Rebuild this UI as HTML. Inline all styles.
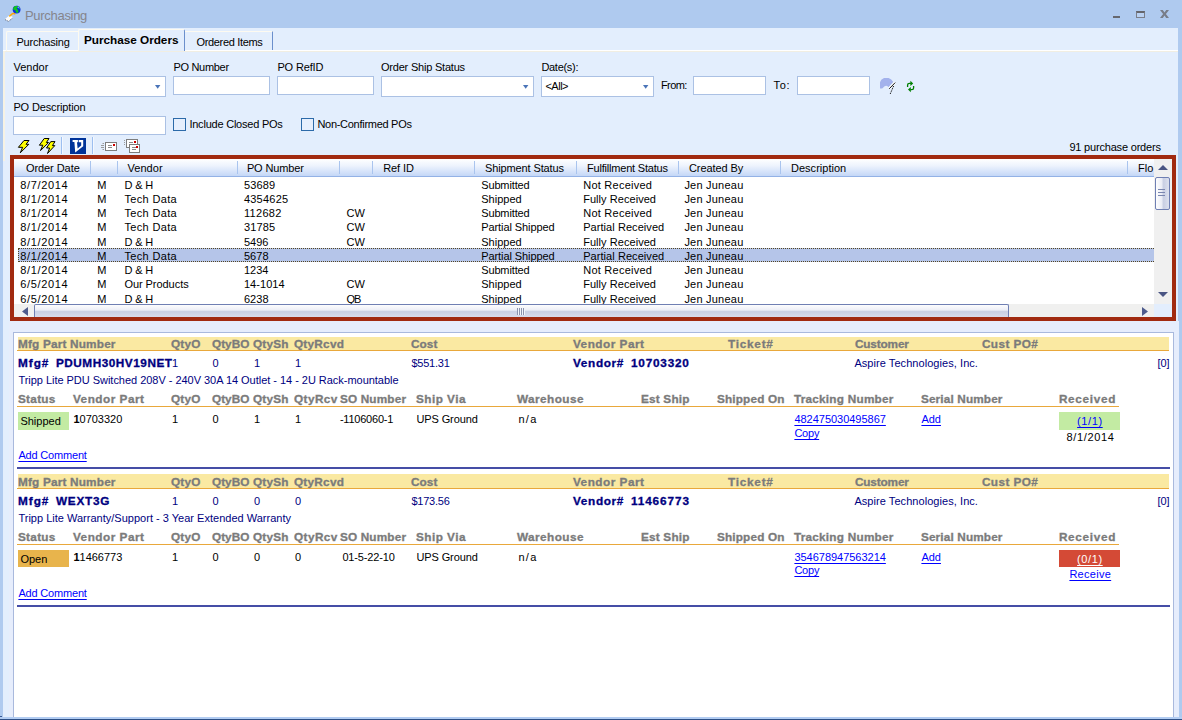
<!DOCTYPE html>
<html><head><meta charset="utf-8"><title>Purchasing</title>
<style>
*{box-sizing:border-box;margin:0;padding:0}
html,body{width:1182px;height:720px;overflow:hidden}
body{background:#afcaef;font-family:"Liberation Sans",sans-serif;font-size:11px;color:#000;position:relative}
.a{position:absolute;white-space:nowrap}
.t{position:absolute;white-space:nowrap;line-height:13px;height:13px}
.b{font-weight:bold}
.b.n{-webkit-text-stroke:0.3px #000080}
.g{font-weight:bold;color:#7b7b7b;-webkit-text-stroke:0.3px #7b7b7b}
.n{color:#000080}
.l{color:#0000ff;text-decoration:underline;text-underline-offset:1.5px;text-decoration-thickness:1px}
.inp{position:absolute;background:#fff;border:1px solid #abc1e4}
.cb{position:absolute;border:1px solid #2c6aa9;background:#e6effd}
.arrow{position:absolute;width:0;height:0;border-left:2.5px solid transparent;border-right:2.5px solid transparent;border-top:3.5px solid #4a74b8}
.hd{position:absolute;background:linear-gradient(#ffffff 0%,#edf3fd 40%,#c4d7f7 100%);border-bottom:1px solid #93b2e6}
.sep{position:absolute;width:1px;background:#a9c4ee}
</style></head><body>
<div class="a" style="left:25px;top:8px;font-size:13px;color:#85858c;line-height:16px;letter-spacing:-0.3px" >Purchasing</div>
<svg class="a" style="left:0;top:0" width="40" height="28" viewBox="0 0 40 28">
<path d="M9.5 15.2L13.2 17.2L8.6 21.2L4.8 19.2Z" fill="#fbfbfb"/>
<path d="M5 19.6L8.6 21.4L13 17.6" fill="none" stroke="#5a5a66" stroke-width="0.9" stroke-dasharray="1 1"/>
<path d="M9.3 16.4L12.4 13.6L14.6 13.2L14.6 14.4" fill="none" stroke="#ffa800" stroke-width="1.5"/>
<circle cx="16.6" cy="9.6" r="3.9" fill="#0a2fe0"/>
<path d="M13.4 7.4L14.6 6.2L17.4 5.8L18 7L16.4 8.2L17.8 9.6L18.6 11.8L17.6 13L16 12.6L15.6 10.8L14 9.8L13 9.6Z" fill="#0fc520"/>
<path d="M19.2 6.8L20.2 8.4L19.6 9L18.6 7.6Z" fill="#19d34a"/>
<circle cx="18.4" cy="7.4" r="0.8" fill="#6fa8f5"/>
</svg>
<div class="a" style="left:1113px;top:16px;width:7px;height:2px;background:#66686f"></div>
<div class="a" style="left:1136px;top:11px;width:9px;height:7px;border:1px solid #7b7f8a;border-top:2px solid #64656b;background:#b9d1f2"></div>
<svg class="a" style="left:1160px;top:10px" width="9" height="8" viewBox="0 0 9 8"><path d="M0 0H2.8L4.5 2.4L6.2 0H9L5.9 4L9 8H6.2L4.5 5.6L2.8 8H0L3.1 4Z" fill="#787d88"/></svg>
<div class="a" style="left:3px;top:28px;width:1175px;height:689px;background:#e3eefd"></div>
<div class="a" style="left:3px;top:50px;width:1175px;height:1px;background:#fff"></div>
<div class="a" style="left:3px;top:51px;width:1175px;height:1px;background:#f1eee2"></div>
<div class="a" style="left:6px;top:31px;width:72px;height:20px;border-top:1px solid #fdfaf0;border-left:1px solid #fdfaf0;border-radius:2px 0 0 0"></div>
<div class="a" style="left:78px;top:29px;width:107px;height:22px;background:#e3eefd;border-top:1px solid #fdfaf0;border-left:1px solid #fdfaf0;border-right:1px solid #6b8fcc;border-radius:2px 2px 0 0"></div>
<div class="a" style="left:185px;top:31px;width:88px;height:19px;border-top:1px solid #fdfaf0;border-right:1px solid #6b8fcc"></div>
<div class="t" id="t1" style="left:16.4px;top:35.5px;letter-spacing:-0.17px;">Purchasing</div>
<div class="t b" id="t2" style="left:84.4px;top:33.6px;transform:scaleX(1.07);transform-origin:1px 0;letter-spacing:-0.02px;">Purchase Orders</div>
<div class="t" id="t3" style="left:196.4px;top:35.5px;letter-spacing:-0.32px;">Ordered Items</div>
<div class="t" id="t4" style="left:13.4px;top:61px;letter-spacing:0.03px;">Vendor</div>
<div class="t" id="t5" style="left:173.4px;top:61px;letter-spacing:-0.30px;">PO Number</div>
<div class="t" id="t6" style="left:277.4px;top:61px;letter-spacing:-0.14px;">PO RefID</div>
<div class="t" id="t7" style="left:381px;top:61px;letter-spacing:-0.21px;">Order Ship Status</div>
<div class="t" id="t8" style="left:541.4px;top:61px;letter-spacing:-0.29px;">Date(s):</div>
<div class="inp" style="left:13px;top:76px;width:153px;height:21px;"></div>
<svg class="a" style="left:155px;top:85px" width="6" height="4" viewBox="0 0 6 4"><path d="M0 0H5.4L2.7 3.8Z" fill="#4a74b8"/></svg>
<div class="inp" style="left:173px;top:76px;width:97px;height:19px;"></div>
<div class="inp" style="left:277px;top:76px;width:97px;height:19px;"></div>
<div class="inp" style="left:381px;top:76px;width:153px;height:21px;"></div>
<svg class="a" style="left:523px;top:85px" width="6" height="4" viewBox="0 0 6 4"><path d="M0 0H5.4L2.7 3.8Z" fill="#4a74b8"/></svg>
<div class="inp" style="left:541px;top:76px;width:113px;height:21px;"></div>
<svg class="a" style="left:643px;top:85px" width="6" height="4" viewBox="0 0 6 4"><path d="M0 0H5.4L2.7 3.8Z" fill="#4a74b8"/></svg>
<div class="t" id="t9" style="left:545.4px;top:80px;letter-spacing:-0.49px;">&lt;All&gt;</div>
<div class="t" id="t10" style="left:660.9px;top:79px;letter-spacing:-0.56px;">From:</div>
<div class="inp" style="left:693px;top:76px;width:73px;height:19px;"></div>
<div class="t" id="t11" style="left:773.6px;top:79px;letter-spacing:0.66px;">To:</div>
<div class="inp" style="left:797px;top:76px;width:73px;height:19px;"></div>
<div class="t" id="t12" style="left:13.4px;top:101px;letter-spacing:-0.14px;">PO Description</div>
<div class="inp" style="left:13px;top:116px;width:153px;height:19px;"></div>
<div class="cb" style="left:173px;top:118px;width:13px;height:13px;"></div>
<div class="t" id="t13" style="left:189.4px;top:118px;letter-spacing:-0.22px;">Include Closed POs</div>
<div class="cb" style="left:301px;top:118px;width:13px;height:13px;"></div>
<div class="t" id="t14" style="left:317.4px;top:118px;letter-spacing:-0.28px;">Non-Confirmed POs</div>
<div class="t" id="t15" style="left:1069.4px;top:140.5px;letter-spacing:-0.19px;">91 purchase orders</div>
<svg class="a" style="left:876px;top:74px" width="44" height="24" viewBox="876 74 44 24">
<path d="M880 88.6V82.2Q880.6 79.4 884 78.1H888.6Q891.6 79.2 893.2 82L888.6 87.2Q886.6 85 884.6 86.2L882.2 88.6Z" fill="#a3b2ec"/>
<path d="M895 82.4L889 88.6" stroke="#fff" stroke-width="2.2"/>
<path d="M895.2 82.6L889.2 88.8" stroke="#111" stroke-width="1"/>
<path d="M893.6 86L890.2 94" stroke="#111" stroke-width="1" stroke-dasharray="1.4 1"/>
<g fill="none" stroke="#008000" stroke-width="1.3">
<path d="M907.6 87V85Q907.6 83.4 909.4 83.4H911"/>
<path d="M913.6 86V88Q913.6 89.6 911.8 89.6H910.4"/>
</g>
<path d="M910.4 80.8L913.2 83.4L910.4 86Z" fill="#008000"/>
<path d="M910.8 87L908 89.6L910.8 92.2Z" fill="#008000"/>
</svg>
<svg class="a" style="left:14px;top:136px" width="130" height="19" viewBox="14 136 130 19">
<g fill="#ffff00" stroke="#000" stroke-width="1" stroke-linejoin="miter" stroke-miterlimit="2.5">
<path d="M24 140.5H29L26 144.3H28.8L20.3 152.8L22.6 147.3H18.4Z"/>
<path d="M44.2 138.5H49L46.4 142.5H48.6L40.5 150.6L42.8 145.2H39.4Z"/>
<path d="M50.8 141.6H55L52.4 145.6H54.8L47.5 153.5L49.6 148H46.5Z"/>
</g>
<rect x="61" y="137" width="1" height="17" fill="#9dbff0"/><rect x="62" y="137" width="1" height="17" fill="#f4f8ff"/>
<rect x="70" y="138" width="16" height="16" fill="#003399"/>
<path d="M72.6 140H83.2V146.2L75.2 152.4L74.4 142H72.6Z" fill="#fff"/>
<path d="M77 142.2H81.2V145.4L77.6 148.6Z" fill="#003399"/>
<path d="M78.4 140V144" stroke="#003399" stroke-width="0.8"/>
<rect x="92" y="137" width="1" height="17" fill="#9dbff0"/><rect x="93" y="137" width="1" height="17" fill="#f4f8ff"/>
<rect x="105.5" y="142.5" width="11" height="8" fill="#fff" stroke="#7d7d7d"/>
<rect x="113" y="144" width="2" height="2" fill="#cc0000"/>
<path d="M108 145.5H112M108 147.5H112" stroke="#8a8a8a"/>
<path d="M102.5 143.5H104M101 145.5H104M101 147.5H104M102.5 149.5H104" stroke="#9a9a9a"/>
<rect x="126.5" y="139.5" width="11" height="8" fill="#fff" stroke="#7d7d7d"/>
<rect x="134" y="141" width="2" height="2" fill="#cc0000"/>
<path d="M129 142.5H133" stroke="#8a8a8a"/>
<rect x="129.5" y="144.5" width="10" height="8" fill="#fff" stroke="#7d7d7d"/>
<rect x="136" y="146" width="2" height="2" fill="#cc0000"/>
<path d="M132 147.5H136M132 149.5H136" stroke="#8a8a8a"/>
<path d="M124 140.5H125M124 142.5H125M124 144.5H125" stroke="#9a9a9a"/>
</svg>
<div class="a" style="left:3px;top:51px;width:1.5px;height:110px;background:#f6f2e4"></div>
<div class="a" style="left:10px;top:155px;width:1166px;height:166px;border:4px solid #a12a10;background:#fff"></div>
<div class="hd" style="left:14px;top:159px;width:1140px;height:18px;"></div>
<div class="sep" style="left:90px;top:161px;width:1px;height:13px;"></div>
<div class="sep" style="left:117px;top:161px;width:1px;height:13px;"></div>
<div class="sep" style="left:237px;top:161px;width:1px;height:13px;"></div>
<div class="sep" style="left:339px;top:161px;width:1px;height:13px;"></div>
<div class="sep" style="left:372px;top:161px;width:1px;height:13px;"></div>
<div class="sep" style="left:474px;top:161px;width:1px;height:13px;"></div>
<div class="sep" style="left:576px;top:161px;width:1px;height:13px;"></div>
<div class="sep" style="left:678px;top:161px;width:1px;height:13px;"></div>
<div class="sep" style="left:780px;top:161px;width:1px;height:13px;"></div>
<div class="sep" style="left:1127px;top:161px;width:1px;height:13px;"></div>
<div class="t" id="t16" style="left:25.9px;top:162px;letter-spacing:-0.06px;">Order Date</div>
<div class="t" id="t17" style="left:127.4px;top:162px;letter-spacing:0.08px;">Vendor</div>
<div class="t" id="t18" style="left:246.9px;top:162px;letter-spacing:-0.13px;">PO Number</div>
<div class="t" id="t19" style="left:383.2px;top:162px;letter-spacing:-0.10px;">Ref ID</div>
<div class="t" id="t20" style="left:485.1px;top:162px;letter-spacing:-0.13px;">Shipment Status</div>
<div class="t" id="t21" style="left:587px;top:162px;letter-spacing:-0.20px;">Fulfillment Status</div>
<div class="t" id="t22" style="left:689px;top:162px;letter-spacing:-0.08px;">Created By</div>
<div class="t" id="t23" style="left:791px;top:162px;letter-spacing:0.02px;">Description</div>
<div class="a" style="left:1138px;top:159px;width:16px;height:17px;overflow:hidden"><div class="t" style="left:0;top:3px">Flo</div></div>
<div class="t" id="t24" style="left:20.2px;top:179px;letter-spacing:0.67px;">8/7/2014</div>
<div class="t" id="t25" style="left:97.2px;top:179px;letter-spacing:0.33px;">M</div>
<div class="t" id="t26" style="left:124.4px;top:179px;letter-spacing:-0.11px;">D &amp; H</div>
<div class="t" id="t27" style="left:243.9px;top:179px;letter-spacing:0.13px;">53689</div>
<div class="t" id="t28" style="left:481.2px;top:179px;letter-spacing:-0.13px;">Submitted</div>
<div class="t" id="t29" style="left:583.2px;top:179px;letter-spacing:0.25px;">Not Received</div>
<div class="t" id="t30" style="left:684.4px;top:179px;letter-spacing:0.22px;">Jen Juneau</div>
<div class="t" id="t31" style="left:20.2px;top:193px;letter-spacing:0.67px;">8/1/2014</div>
<div class="t" id="t32" style="left:97.2px;top:193px;letter-spacing:0.33px;">M</div>
<div class="t" id="t33" style="left:124.4px;top:193px;letter-spacing:0.35px;">Tech Data</div>
<div class="t" id="t34" style="left:243.9px;top:193px;letter-spacing:0.23px;">4354625</div>
<div class="t" id="t35" style="left:481.2px;top:193px;letter-spacing:0.02px;">Shipped</div>
<div class="t" id="t36" style="left:583.2px;top:193px;letter-spacing:0.05px;">Fully Received</div>
<div class="t" id="t37" style="left:684.4px;top:193px;letter-spacing:0.22px;">Jen Juneau</div>
<div class="t" id="t38" style="left:20.2px;top:207px;letter-spacing:0.67px;">8/1/2014</div>
<div class="t" id="t39" style="left:97.2px;top:207px;letter-spacing:0.33px;">M</div>
<div class="t" id="t40" style="left:124.4px;top:207px;letter-spacing:0.35px;">Tech Data</div>
<div class="t" id="t41" style="left:243.9px;top:207px;letter-spacing:0.32px;">112682</div>
<div class="t" id="t42" style="left:346.4px;top:207px;letter-spacing:0.17px;">CW</div>
<div class="t" id="t43" style="left:481.2px;top:207px;letter-spacing:-0.13px;">Submitted</div>
<div class="t" id="t44" style="left:583.2px;top:207px;letter-spacing:0.25px;">Not Received</div>
<div class="t" id="t45" style="left:684.4px;top:207px;letter-spacing:0.22px;">Jen Juneau</div>
<div class="t" id="t46" style="left:20.2px;top:221px;letter-spacing:0.67px;">8/1/2014</div>
<div class="t" id="t47" style="left:97.2px;top:221px;letter-spacing:0.33px;">M</div>
<div class="t" id="t48" style="left:124.4px;top:221px;letter-spacing:0.35px;">Tech Data</div>
<div class="t" id="t49" style="left:243.9px;top:221px;letter-spacing:0.18px;">31785</div>
<div class="t" id="t50" style="left:346.4px;top:221px;letter-spacing:0.17px;">CW</div>
<div class="t" id="t51" style="left:481.2px;top:221px;letter-spacing:-0.08px;">Partial Shipped</div>
<div class="t" id="t52" style="left:583.2px;top:221px;letter-spacing:0.06px;">Partial Received</div>
<div class="t" id="t53" style="left:684.4px;top:221px;letter-spacing:0.22px;">Jen Juneau</div>
<div class="t" id="t54" style="left:20.2px;top:236px;letter-spacing:0.67px;">8/1/2014</div>
<div class="t" id="t55" style="left:97.2px;top:236px;letter-spacing:0.33px;">M</div>
<div class="t" id="t56" style="left:124.4px;top:236px;letter-spacing:-0.11px;">D &amp; H</div>
<div class="t" id="t57" style="left:243.9px;top:236px;letter-spacing:0.01px;">5496</div>
<div class="t" id="t58" style="left:346.4px;top:236px;letter-spacing:0.17px;">CW</div>
<div class="t" id="t59" style="left:481.2px;top:236px;letter-spacing:0.02px;">Shipped</div>
<div class="t" id="t60" style="left:583.2px;top:236px;letter-spacing:0.05px;">Fully Received</div>
<div class="t" id="t61" style="left:684.4px;top:236px;letter-spacing:0.22px;">Jen Juneau</div>
<div class="a" style="left:18px;top:248px;width:1136px;height:14px;background:#b5c5e9;border:1px dotted #55461f;border-right:0"></div>
<div class="t" id="t62" style="left:20.2px;top:250px;letter-spacing:0.67px;">8/1/2014</div>
<div class="t" id="t63" style="left:97.2px;top:250px;letter-spacing:0.33px;">M</div>
<div class="t" id="t64" style="left:124.4px;top:250px;letter-spacing:0.35px;">Tech Data</div>
<div class="t" id="t65" style="left:243.9px;top:250px;letter-spacing:0.07px;">5678</div>
<div class="t" id="t66" style="left:481.2px;top:250px;letter-spacing:-0.08px;">Partial Shipped</div>
<div class="t" id="t67" style="left:583.2px;top:250px;letter-spacing:0.06px;">Partial Received</div>
<div class="t" id="t68" style="left:684.4px;top:250px;letter-spacing:0.22px;">Jen Juneau</div>
<div class="t" id="t69" style="left:20.2px;top:264px;letter-spacing:0.67px;">8/1/2014</div>
<div class="t" id="t70" style="left:97.2px;top:264px;letter-spacing:0.33px;">M</div>
<div class="t" id="t71" style="left:124.4px;top:264px;letter-spacing:-0.11px;">D &amp; H</div>
<div class="t" id="t72" style="left:243.9px;top:264px;letter-spacing:0.01px;">1234</div>
<div class="t" id="t73" style="left:481.2px;top:264px;letter-spacing:-0.13px;">Submitted</div>
<div class="t" id="t74" style="left:583.2px;top:264px;letter-spacing:0.25px;">Not Received</div>
<div class="t" id="t75" style="left:684.4px;top:264px;letter-spacing:0.22px;">Jen Juneau</div>
<div class="t" id="t76" style="left:20.2px;top:278px;letter-spacing:0.67px;">6/5/2014</div>
<div class="t" id="t77" style="left:97.2px;top:278px;letter-spacing:0.33px;">M</div>
<div class="t" id="t78" style="left:124.4px;top:278px;letter-spacing:-0.05px;">Our Products</div>
<div class="t" id="t79" style="left:243.9px;top:278px;letter-spacing:0.07px;">14-1014</div>
<div class="t" id="t80" style="left:346.4px;top:278px;letter-spacing:0.17px;">CW</div>
<div class="t" id="t81" style="left:481.2px;top:278px;letter-spacing:0.02px;">Shipped</div>
<div class="t" id="t82" style="left:583.2px;top:278px;letter-spacing:0.05px;">Fully Received</div>
<div class="t" id="t83" style="left:684.4px;top:278px;letter-spacing:0.22px;">Jen Juneau</div>
<div class="t" id="t84" style="left:20.2px;top:293px;letter-spacing:0.67px;">6/5/2014</div>
<div class="t" id="t85" style="left:97.2px;top:293px;letter-spacing:0.33px;">M</div>
<div class="t" id="t86" style="left:124.4px;top:293px;letter-spacing:-0.11px;">D &amp; H</div>
<div class="t" id="t87" style="left:243.9px;top:293px;letter-spacing:0.07px;">6238</div>
<div class="t" id="t88" style="left:346.4px;top:293px;letter-spacing:-0.91px;">QB</div>
<div class="t" id="t89" style="left:481.2px;top:293px;letter-spacing:0.02px;">Shipped</div>
<div class="t" id="t90" style="left:583.2px;top:293px;letter-spacing:0.05px;">Fully Received</div>
<div class="t" id="t91" style="left:684.4px;top:293px;letter-spacing:0.22px;">Jen Juneau</div>
<div class="a" style="left:1154px;top:159px;width:18px;height:145px;background:#f0f0f0"></div>
<div class="a" style="left:1154px;top:304px;width:18px;height:13px;background:#e3eefd"></div>
<svg class="a" style="left:1158px;top:165px" width="10" height="5"><path d="M0 5L5 0L10 5Z" fill="#4a5583"/></svg>
<svg class="a" style="left:1158px;top:292px" width="10" height="5"><path d="M0 0L5 5L10 0Z" fill="#4a5583"/></svg>
<div class="a" style="left:1155px;top:177px;width:15px;height:33px;border:1px solid #6f7fb3;border-radius:2px;background:linear-gradient(90deg,#fdfdfe 0%,#eceef6 42%,#c9cfe3 58%,#dde1ee 100%)"></div>
<div class="a" style="left:1158px;top:189px;width:7px;height:1px;background:#7a86b0"></div>
<div class="a" style="left:1158px;top:192px;width:7px;height:1px;background:#7a86b0"></div>
<div class="a" style="left:1158px;top:195px;width:7px;height:1px;background:#7a86b0"></div>
<div class="a" style="left:14px;top:303.5px;width:1140px;height:13.5px;background:#f0f0ef"></div>
<svg class="a" style="left:22px;top:306.5px" width="6" height="9"><path d="M6 0L0 4.5L6 9Z" fill="#4e5b8c"/></svg>
<svg class="a" style="left:1142px;top:306.5px" width="6" height="9"><path d="M0 0L6 4.5L0 9Z" fill="#4e5b8c"/></svg>
<div class="a" style="left:34px;top:304px;width:975px;height:13px;border:1px solid #6f7fb3;border-bottom:0;border-radius:2px 2px 0 0;background:linear-gradient(#fdfdfe 0%,#eceef6 42%,#c9cfe3 55%,#d8dceb 100%)"></div>
<div class="a" style="left:517px;top:308px;width:1px;height:7px;background:#8a92ad"></div>
<div class="a" style="left:518px;top:308px;width:1px;height:7px;background:#f2f4f9"></div>
<div class="a" style="left:519px;top:308px;width:1px;height:7px;background:#8a92ad"></div>
<div class="a" style="left:520px;top:308px;width:1px;height:7px;background:#f2f4f9"></div>
<div class="a" style="left:521px;top:308px;width:1px;height:7px;background:#8a92ad"></div>
<div class="a" style="left:522px;top:308px;width:1px;height:7px;background:#f2f4f9"></div>
<div class="a" style="left:523px;top:308px;width:1px;height:7px;background:#8a92ad"></div>
<div class="a" style="left:524px;top:308px;width:1px;height:7px;background:#f2f4f9"></div>
<div class="a" style="left:9px;top:321px;width:1170px;height:396px;background:#e6edfc"></div>
<div class="a" style="left:13px;top:332px;width:1161px;height:385px;border:1px solid #a9b9dd;border-bottom:0;background:#fff"></div>
<div class="a" style="left:18px;top:337px;width:1151px;height:13px;background:#fae9a2"></div>
<div class="a" style="left:17px;top:350px;width:1152px;height:1px;background:#e9a83b"></div>
<div class="t g" id="t92" style="left:18.4px;top:338px;transform:scaleX(1.07);transform-origin:1px 0;letter-spacing:0.18px;">Mfg Part Number</div>
<div class="t g" id="t93" style="left:170.9px;top:338px;transform:scaleX(1.07);transform-origin:1px 0;letter-spacing:0.22px;">QtyO</div>
<div class="t g" id="t94" style="left:211.9px;top:338px;transform:scaleX(1.07);transform-origin:1px 0;letter-spacing:0.05px;">QtyBO</div>
<div class="t g" id="t95" style="left:253.4px;top:338px;transform:scaleX(1.07);transform-origin:1px 0;letter-spacing:0.19px;">QtySh</div>
<div class="t g" id="t96" style="left:293.9px;top:338px;transform:scaleX(1.07);transform-origin:1px 0;letter-spacing:0.25px;">QtyRcvd</div>
<div class="t g" id="t97" style="left:411.4px;top:338px;transform:scaleX(1.07);transform-origin:1px 0;letter-spacing:0.10px;">Cost</div>
<div class="t g" id="t98" style="left:573.4px;top:338px;transform:scaleX(1.07);transform-origin:1px 0;letter-spacing:0.46px;">Vendor Part</div>
<div class="t g" id="t99" style="left:728.4px;top:338px;transform:scaleX(1.07);transform-origin:1px 0;letter-spacing:0.72px;">Ticket#</div>
<div class="t g" id="t100" style="left:854.9px;top:338px;transform:scaleX(1.07);transform-origin:1px 0;letter-spacing:-0.13px;">Customer</div>
<div class="t g" id="t101" style="left:981.9px;top:338px;transform:scaleX(1.07);transform-origin:1px 0;letter-spacing:0.40px;">Cust PO#</div>
<div class="t b n" id="t102" style="left:18.4px;top:357px;transform:scaleX(1.07);transform-origin:1px 0;letter-spacing:0.94px;">Mfg#</div>
<div class="t b n" id="t103" style="left:56.4px;top:357px;transform:scaleX(1.07);transform-origin:1px 0;letter-spacing:0.49px;">PDUMH30HV19NET</div>
<div class="t n" style="left:171.9px;top:357px;">1</div>
<div class="t n" style="left:212.4px;top:357px;">0</div>
<div class="t n" style="left:253.9px;top:357px;">1</div>
<div class="t n" style="left:294.9px;top:357px;">1</div>
<div class="t n" id="t108" style="left:411.4px;top:357px;letter-spacing:-0.21px;">$551.31</div>
<div class="t b n" id="t109" style="left:573.4px;top:357px;transform:scaleX(1.07);transform-origin:1px 0;letter-spacing:0.63px;">Vendor#</div>
<div class="t b n" id="t110" style="left:631.4px;top:357px;transform:scaleX(1.07);transform-origin:1px 0;letter-spacing:0.75px;">10703320</div>
<div class="t n" id="t111" style="left:854.4px;top:357px;letter-spacing:0.06px;">Aspire Technologies, Inc.</div>
<div class="t n" style="left:1157.4px;top:357px;">[0]</div>
<div class="t n" id="t113" style="left:18.4px;top:374px;letter-spacing:-0.03px;">Tripp Lite PDU Switched 208V - 240V 30A 14 Outlet - 14 - 2U Rack-mountable</div>
<div class="t g" id="t114" style="left:18.4px;top:393px;transform:scaleX(1.07);transform-origin:1px 0;letter-spacing:0.28px;">Status</div>
<div class="t g" id="t115" style="left:72.9px;top:393px;transform:scaleX(1.07);transform-origin:1px 0;letter-spacing:0.46px;">Vendor Part</div>
<div class="t g" id="t116" style="left:170.9px;top:393px;transform:scaleX(1.07);transform-origin:1px 0;letter-spacing:0.22px;">QtyO</div>
<div class="t g" id="t117" style="left:211.9px;top:393px;transform:scaleX(1.07);transform-origin:1px 0;letter-spacing:0.05px;">QtyBO</div>
<div class="t g" id="t118" style="left:253.4px;top:393px;transform:scaleX(1.07);transform-origin:1px 0;letter-spacing:0.19px;">QtySh</div>
<div class="t g" id="t119" style="left:293.9px;top:393px;transform:scaleX(1.07);transform-origin:1px 0;letter-spacing:0.42px;">QtyRcv</div>
<div class="t g" id="t120" style="left:339.9px;top:393px;transform:scaleX(1.07);transform-origin:1px 0;letter-spacing:0.15px;">SO Number</div>
<div class="t g" id="t121" style="left:415.9px;top:393px;transform:scaleX(1.07);transform-origin:1px 0;letter-spacing:0.44px;">Ship Via</div>
<div class="t g" id="t122" style="left:517.4px;top:393px;transform:scaleX(1.07);transform-origin:1px 0;letter-spacing:0.41px;">Warehouse</div>
<div class="t g" id="t123" style="left:640.9px;top:393px;transform:scaleX(1.07);transform-origin:1px 0;letter-spacing:0.19px;">Est Ship</div>
<div class="t g" id="t124" style="left:717.4px;top:393px;transform:scaleX(1.07);transform-origin:1px 0;letter-spacing:0.15px;">Shipped On</div>
<div class="t g" id="t125" style="left:794.4px;top:393px;transform:scaleX(1.07);transform-origin:1px 0;letter-spacing:0.22px;">Tracking Number</div>
<div class="t g" id="t126" style="left:920.9px;top:393px;transform:scaleX(1.07);transform-origin:1px 0;letter-spacing:0.13px;">Serial Number</div>
<div class="t g" id="t127" style="left:1058.9px;top:393px;transform:scaleX(1.07);transform-origin:1px 0;letter-spacing:0.64px;">Received</div>
<div class="a" style="left:17px;top:406px;width:1102px;height:1px;background:#e9a83b"></div>
<div class="a" style="left:18px;top:412px;width:51px;height:18px;background:#c3eba3"></div>
<div class="t" style="left:20.4px;top:415px;">Shipped</div>
<div class="t" style="left:73.4px;top:413px;"><b>1</b>0703320</div>
<div class="t" style="left:171.9px;top:413px;">1</div>
<div class="t" style="left:212.4px;top:413px;">0</div>
<div class="t" style="left:253.9px;top:413px;">1</div>
<div class="t" style="left:294.9px;top:413px;">1</div>
<div class="t" id="t134" style="left:339.9px;top:413px;letter-spacing:-0.22px;">-1106060-1</div>
<div class="t" id="t135" style="left:416.4px;top:413px;letter-spacing:-0.10px;">UPS Ground</div>
<div class="t" id="t136" style="left:518.4px;top:413px;letter-spacing:1.35px;">n/a</div>
<div class="t l" id="t137" style="left:794.4px;top:413px;letter-spacing:-0.02px;">482475030495867</div>
<div class="t l" id="t138" style="left:794.4px;top:427px;letter-spacing:-0.23px;">Copy</div>
<div class="t l" style="left:921.4px;top:413px;">Add</div>
<div class="a" style="left:1059px;top:412px;width:61px;height:18px;background:#c3eba3"></div>
<div class="t l" id="t140" style="left:1077.1px;top:415px;letter-spacing:0.59px;">(1/1)</div>
<div class="t" id="t141" style="left:1066.4px;top:431px;letter-spacing:0.67px;">8/1/2014</div>
<div class="t l" id="t142" style="left:18.4px;top:449px;letter-spacing:-0.18px;">Add Comment</div>
<div class="a" style="left:17px;top:467px;width:1153px;height:2px;background:#454da6"></div>
<div class="a" style="left:18px;top:474px;width:1151px;height:14px;background:#fae9a2"></div>
<div class="a" style="left:17px;top:488px;width:1152px;height:1px;background:#e9a83b"></div>
<div class="t g" id="t143" style="left:18.4px;top:476px;transform:scaleX(1.07);transform-origin:1px 0;letter-spacing:0.18px;">Mfg Part Number</div>
<div class="t g" id="t144" style="left:170.9px;top:476px;transform:scaleX(1.07);transform-origin:1px 0;letter-spacing:0.22px;">QtyO</div>
<div class="t g" id="t145" style="left:211.9px;top:476px;transform:scaleX(1.07);transform-origin:1px 0;letter-spacing:0.05px;">QtyBO</div>
<div class="t g" id="t146" style="left:253.4px;top:476px;transform:scaleX(1.07);transform-origin:1px 0;letter-spacing:0.19px;">QtySh</div>
<div class="t g" id="t147" style="left:293.9px;top:476px;transform:scaleX(1.07);transform-origin:1px 0;letter-spacing:0.25px;">QtyRcvd</div>
<div class="t g" id="t148" style="left:411.4px;top:476px;transform:scaleX(1.07);transform-origin:1px 0;letter-spacing:0.10px;">Cost</div>
<div class="t g" id="t149" style="left:573.4px;top:476px;transform:scaleX(1.07);transform-origin:1px 0;letter-spacing:0.46px;">Vendor Part</div>
<div class="t g" id="t150" style="left:728.4px;top:476px;transform:scaleX(1.07);transform-origin:1px 0;letter-spacing:0.72px;">Ticket#</div>
<div class="t g" id="t151" style="left:854.9px;top:476px;transform:scaleX(1.07);transform-origin:1px 0;letter-spacing:-0.13px;">Customer</div>
<div class="t g" id="t152" style="left:981.9px;top:476px;transform:scaleX(1.07);transform-origin:1px 0;letter-spacing:0.40px;">Cust PO#</div>
<div class="t b n" id="t153" style="left:18.4px;top:495px;transform:scaleX(1.07);transform-origin:1px 0;letter-spacing:0.94px;">Mfg#</div>
<div class="t b n" id="t154" style="left:56.4px;top:495px;transform:scaleX(1.07);transform-origin:1px 0;letter-spacing:0.71px;">WEXT3G</div>
<div class="t n" style="left:171.9px;top:495px;">1</div>
<div class="t n" style="left:212.4px;top:495px;">0</div>
<div class="t n" style="left:253.9px;top:495px;">0</div>
<div class="t n" style="left:294.9px;top:495px;">0</div>
<div class="t n" id="t159" style="left:411.4px;top:495px;letter-spacing:-0.21px;">$173.56</div>
<div class="t b n" id="t160" style="left:573.4px;top:495px;transform:scaleX(1.07);transform-origin:1px 0;letter-spacing:0.63px;">Vendor#</div>
<div class="t b n" id="t161" style="left:631.4px;top:495px;transform:scaleX(1.07);transform-origin:1px 0;letter-spacing:0.84px;">11466773</div>
<div class="t n" id="t162" style="left:854.4px;top:495px;letter-spacing:0.06px;">Aspire Technologies, Inc.</div>
<div class="t n" style="left:1157.4px;top:495px;">[0]</div>
<div class="t n" id="t164" style="left:18.4px;top:512px;letter-spacing:0.01px;">Tripp Lite Warranty/Support - 3 Year Extended Warranty</div>
<div class="t g" id="t165" style="left:18.4px;top:531px;transform:scaleX(1.07);transform-origin:1px 0;letter-spacing:0.28px;">Status</div>
<div class="t g" id="t166" style="left:72.9px;top:531px;transform:scaleX(1.07);transform-origin:1px 0;letter-spacing:0.46px;">Vendor Part</div>
<div class="t g" id="t167" style="left:170.9px;top:531px;transform:scaleX(1.07);transform-origin:1px 0;letter-spacing:0.22px;">QtyO</div>
<div class="t g" id="t168" style="left:211.9px;top:531px;transform:scaleX(1.07);transform-origin:1px 0;letter-spacing:0.05px;">QtyBO</div>
<div class="t g" id="t169" style="left:253.4px;top:531px;transform:scaleX(1.07);transform-origin:1px 0;letter-spacing:0.19px;">QtySh</div>
<div class="t g" id="t170" style="left:293.9px;top:531px;transform:scaleX(1.07);transform-origin:1px 0;letter-spacing:0.42px;">QtyRcv</div>
<div class="t g" id="t171" style="left:339.9px;top:531px;transform:scaleX(1.07);transform-origin:1px 0;letter-spacing:0.15px;">SO Number</div>
<div class="t g" id="t172" style="left:415.9px;top:531px;transform:scaleX(1.07);transform-origin:1px 0;letter-spacing:0.44px;">Ship Via</div>
<div class="t g" id="t173" style="left:517.4px;top:531px;transform:scaleX(1.07);transform-origin:1px 0;letter-spacing:0.41px;">Warehouse</div>
<div class="t g" id="t174" style="left:640.9px;top:531px;transform:scaleX(1.07);transform-origin:1px 0;letter-spacing:0.19px;">Est Ship</div>
<div class="t g" id="t175" style="left:717.4px;top:531px;transform:scaleX(1.07);transform-origin:1px 0;letter-spacing:0.15px;">Shipped On</div>
<div class="t g" id="t176" style="left:794.4px;top:531px;transform:scaleX(1.07);transform-origin:1px 0;letter-spacing:0.22px;">Tracking Number</div>
<div class="t g" id="t177" style="left:920.9px;top:531px;transform:scaleX(1.07);transform-origin:1px 0;letter-spacing:0.13px;">Serial Number</div>
<div class="t g" id="t178" style="left:1058.9px;top:531px;transform:scaleX(1.07);transform-origin:1px 0;letter-spacing:0.64px;">Received</div>
<div class="a" style="left:17px;top:544px;width:1102px;height:1px;background:#e9a83b"></div>
<div class="a" style="left:18px;top:550px;width:51px;height:17px;background:#e8b44c"></div>
<div class="t" style="left:20.4px;top:553px;">Open</div>
<div class="t" style="left:73.4px;top:551px;"><b>1</b>1466773</div>
<div class="t" style="left:171.9px;top:551px;">1</div>
<div class="t" style="left:212.4px;top:551px;">0</div>
<div class="t" style="left:253.9px;top:551px;">0</div>
<div class="t" style="left:294.9px;top:551px;">0</div>
<div class="t" id="t185" style="left:342.4px;top:551px;letter-spacing:-0.15px;">01-5-22-10</div>
<div class="t" id="t186" style="left:416.4px;top:551px;letter-spacing:-0.10px;">UPS Ground</div>
<div class="t" id="t187" style="left:518.4px;top:551px;letter-spacing:1.35px;">n/a</div>
<div class="t l" id="t188" style="left:794.4px;top:551px;letter-spacing:-0.02px;">354678947563214</div>
<div class="t l" id="t189" style="left:794.4px;top:564px;letter-spacing:-0.23px;">Copy</div>
<div class="t l" style="left:921.4px;top:551px;">Add</div>
<div class="a" style="left:1059px;top:550px;width:61px;height:17px;background:#d44a36"></div>
<div class="t l" id="t191" style="left:1077.1px;top:553px;letter-spacing:0.59px;color:#fff;">(0/1)</div>
<div class="t l" id="t192" style="left:1069.4px;top:568px;letter-spacing:0.29px;">Receive</div>
<div class="t l" id="t193" style="left:18.4px;top:587px;letter-spacing:-0.18px;">Add Comment</div>
<div class="a" style="left:17px;top:605px;width:1153px;height:2px;background:#454da6"></div>
<div class="a" style="left:0px;top:717px;width:1182px;height:2px;background:#b3cdf2"></div>
<div class="a" style="left:0px;top:716px;width:2px;height:1px;background:#3a5a94"></div>
<div class="a" style="left:0px;top:719px;width:1182px;height:1px;background:#2d4f86"></div>
</body></html>
